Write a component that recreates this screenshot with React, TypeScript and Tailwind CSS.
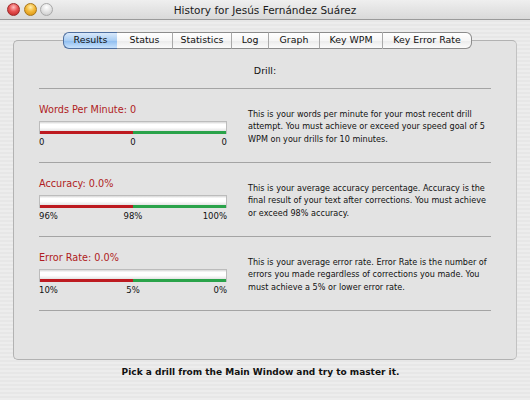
import React from "react";

const tabs = [
	{ label: "Results", w: "w-[54px]" },
	{ label: "Status", w: "w-[55px]" },
	{ label: "Statistics", w: "w-[59px]" },
	{ label: "Log", w: "w-[37px]" },
	{ label: "Graph", w: "w-[51px]" },
	{ label: "Key WPM", w: "w-[63px]" },
	{ label: "Key Error Rate", w: "w-[90px]" },
];

const stats = [
	{
		title: "Words Per Minute: 0",
		marks: ["0", "0", "0"],
		lines: [
			"This is your words per minute for your most recent drill",
			"attempt. You must achieve or exceed your speed goal of 5",
			"WPM on your drills for 10 minutes.",
		],
	},
	{
		title: "Accuracy: 0.0%",
		marks: ["96%", "98%", "100%"],
		lines: [
			"This is your average accuracy percentage. Accuracy is the",
			"final result of your text after corrections. You must achieve",
			"or exceed 98% accuracy.",
		],
	},
	{
		title: "Error Rate: 0.0%",
		marks: ["10%", "5%", "0%"],
		lines: [
			"This is your average error rate. Error Rate is the number of",
			"errors you made regardless of corrections you made. You",
			"must achieve a 5% or lower error rate.",
		],
	},
];

function TitleBar() {
	return (
		<div className="relative flex h-[20px] items-center border-b border-[#9a9a9a] bg-[linear-gradient(#efefef,#d9d9d9)]">
			<div className="flex gap-[3.5px] pl-[7px]">
				<span className="h-[13px] w-[13px] rounded-full border border-[#9b2a2a] bg-[radial-gradient(circle_at_50%_30%,#ffc0c0_0%,#e85454_45%,#b82020_100%)]" />
				<span className="h-[13px] w-[13px] rounded-full border border-[#a7761a] bg-[radial-gradient(circle_at_50%_30%,#fff0b0_0%,#f3b93a_45%,#d38a0a_100%)]" />
				<span className="h-[13px] w-[13px] rounded-full border border-[#a8a8a8] bg-[radial-gradient(circle_at_50%_30%,#ffffff_0%,#e2e2e2_50%,#c4c4c4_100%)]" />
			</div>
			<div className="absolute inset-0 flex items-center justify-center pt-[2px] text-[10.5px] text-[#1a1a1a]">
				History for Jesús Fernández Suárez
			</div>
		</div>
	);
}

function Tabs() {
	return (
		<div className="relative z-10 -mb-[9px] flex pl-[50px]">
			{tabs.map((t, i) => {
				const active = i === 0;
				return (
					<div
						key={t.label}
						className={[
							"flex h-[17px] items-center justify-center border-y text-[9.4px] text-[#111]",
							t.w,
							active
								? "rounded-l-[6px] border-l border-[#4f6f9f] bg-[linear-gradient(#d9e9fb,#a9cdf3_50%,#8ebdf0_52%,#c8e2fc)]"
								: "border-[#8c8c8c] border-l-[#a9a9a9] bg-[linear-gradient(#ffffff,#f6f6f6_50%,#ebebeb_52%,#fbfbfb)]",
							i === 1 ? "border-l-0" : "",
							i > 1 ? "border-l" : "",
							i === tabs.length - 1 ? "rounded-r-[6px] border-r border-r-[#8c8c8c]" : "",
						].join(" ")}
					>
						{t.label}
					</div>
				);
			})}
		</div>
	);
}

function Bar() {
	return (
		<div className="flex h-[13px] flex-col border-x border-t border-[#bcbcbc]">
			<div className="flex-1 bg-[linear-gradient(#d6d6d6,#ffffff_25%,#ffffff_60%,#e4e4e4)]" />
			<div className="flex h-[3px]">
				<div className="flex-1 bg-[#bd1a20]" />
				<div className="flex-1 bg-[#2aa34a]" />
			</div>
		</div>
	);
}

function StatRow({ title, marks, lines }: (typeof stats)[number]) {
	return (
		<div className="flex h-[74px] items-center border-b border-[#a4a4a4]">
			<div className="flex w-[188px] flex-col">
				<div className="text-[9.7px] leading-[12px] text-[#b01c22]">{title}</div>
				<div className="mt-[5px]">
					<Bar />
				</div>
				<div className="mt-[2px] grid grid-cols-3 text-[8.5px] leading-[12px] text-[#111]">
					<span className="text-left">{marks[0]}</span>
					<span className="text-center">{marks[1]}</span>
					<span className="text-right">{marks[2]}</span>
				</div>
			</div>
			<div className="ml-[21px] mt-[2px] whitespace-nowrap text-[8.1px] leading-[12.5px] text-[#111]">
				{lines.map((l) => (
					<div key={l}>{l}</div>
				))}
			</div>
		</div>
	);
}

export default function App() {
	return (
		<div className="flex h-[400px] w-[530px] flex-col overflow-hidden bg-[#ececec] font-['DejaVu_Sans',sans-serif]">
			<TitleBar />
			<div className="flex flex-1 flex-col bg-[repeating-linear-gradient(0deg,#ededed_0px,#ededed_2px,#e7e7e7_2px,#e7e7e7_4px)] px-[13px] pt-[12px]">
				<Tabs />
				<div className="h-[320px] rounded-[5px] border border-[#b2b2b2] border-r-[#c2c2c2] bg-[#e3e3e3] px-[25px]">
					<div className="h-[47px] pt-[24px] text-center text-[9.5px] leading-[12px] text-[#111]">
						Drill:
					</div>
					<div className="border-b border-[#a4a4a4]" />
					{stats.map((s) => (
						<StatRow key={s.title} {...s} />
					))}
				</div>
				<div className="mt-[6px] pr-[9px] text-center text-[9px] font-bold leading-[12px] text-[#111]">
					Pick a drill from the Main Window and try to master it.
				</div>
			</div>
		</div>
	);
}
